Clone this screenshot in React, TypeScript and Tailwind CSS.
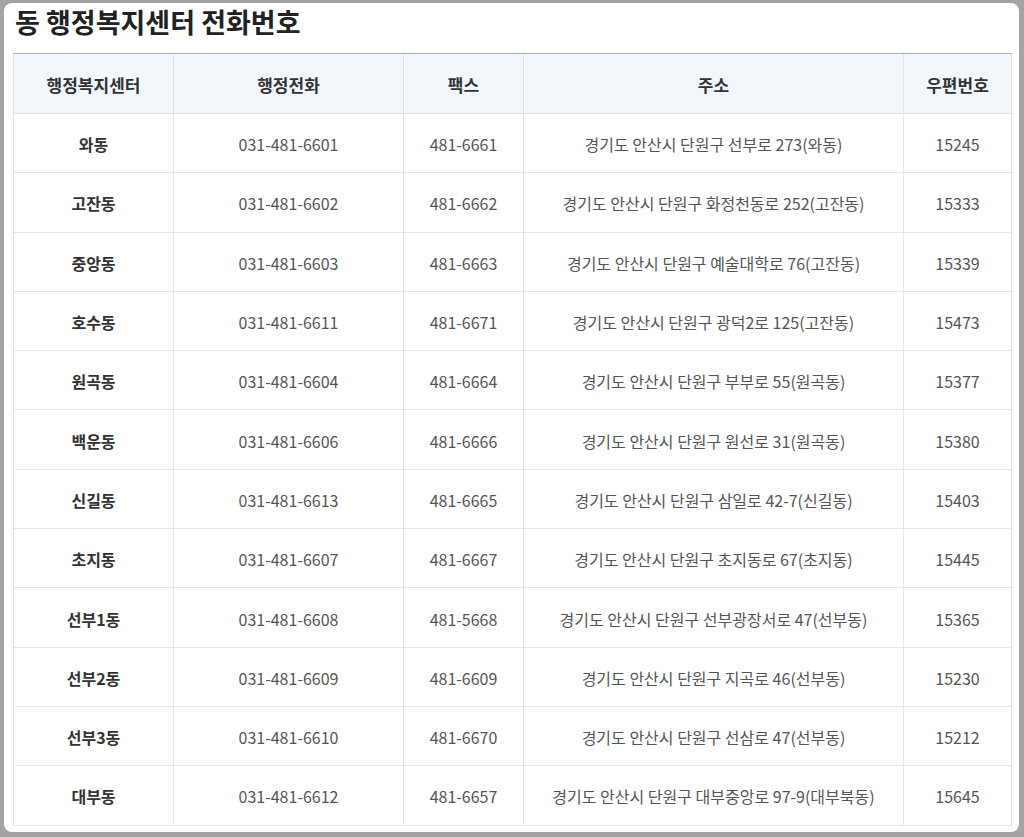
import React from "react";

const ROWS: [string, string, string, string, string][] = [
  ["와동", "031-481-6601", "481-6661", "경기도 안산시 단원구 선부로 273(와동)", "15245"],
  ["고잔동", "031-481-6602", "481-6662", "경기도 안산시 단원구 화정천동로 252(고잔동)", "15333"],
  ["중앙동", "031-481-6603", "481-6663", "경기도 안산시 단원구 예술대학로 76(고잔동)", "15339"],
  ["호수동", "031-481-6611", "481-6671", "경기도 안산시 단원구 광덕2로 125(고잔동)", "15473"],
  ["원곡동", "031-481-6604", "481-6664", "경기도 안산시 단원구 부부로 55(원곡동)", "15377"],
  ["백운동", "031-481-6606", "481-6666", "경기도 안산시 단원구 원선로 31(원곡동)", "15380"],
  ["신길동", "031-481-6613", "481-6665", "경기도 안산시 단원구 삼일로 42-7(신길동)", "15403"],
  ["초지동", "031-481-6607", "481-6667", "경기도 안산시 단원구 초지동로 67(초지동)", "15445"],
  ["선부1동", "031-481-6608", "481-5668", "경기도 안산시 단원구 선부광장서로 47(선부동)", "15365"],
  ["선부2동", "031-481-6609", "481-6609", "경기도 안산시 단원구 지곡로 46(선부동)", "15230"],
  ["선부3동", "031-481-6610", "481-6670", "경기도 안산시 단원구 선삼로 47(선부동)", "15212"],
  ["대부동", "031-481-6612", "481-6657", "경기도 안산시 단원구 대부중앙로 97-9(대부북동)", "15645"],
];

const HEAD = ["행정복지센터", "행정전화", "팩스", "주소", "우편번호"];
const COLS = "grid grid-cols-[160px_230px_120px_380px_1fr]";

export default function App() {
  return (
    <div
      className="w-[1024px] h-[837px] bg-[#a3a3a3] p-[3px_5px_5px_4px]"
      style={{ fontFamily: '"Noto Sans CJK KR", "Noto Sans", sans-serif' }}
    >
      <div className="h-full bg-white rounded-[8px] px-[9px] pt-[1px]">
        <h1 className="text-[27px] font-bold text-[#222] leading-[36px] pl-[2px] mb-[13px]">
          동 행정복지센터 전화번호
        </h1>
        <div className="border-t border-t-[#8fb4cf] border-x border-[#e2e2e2] w-[999px]">
          <div className={`${COLS} h-[60px] bg-[#f2f7fc] border-b border-[#e2e2e2]`}>
            {HEAD.map((h, i) => (
              <div
                key={h}
                className={`flex items-center justify-center pt-[2px] text-[17px] font-bold text-[#333] ${i < 4 ? "border-r border-[#e2e2e2]" : ""}`}
              >
                {h}
              </div>
            ))}
          </div>
          {ROWS.map((r) => (
            <div key={r[0]} className={`${COLS} h-[59.3px] border-b border-[#e6e6e6]`}>
              {r.map((c, i) => (
                <div
                  key={i}
                  className={`flex items-center justify-center pt-[2px] text-[16px] ${i === 0 ? "font-bold text-[#333]" : "text-[#555]"} ${i < 4 ? "border-r border-[#e6e6e6]" : ""}`}
                >
                  {c}
                </div>
              ))}
            </div>
          ))}
        </div>
      </div>
    </div>
  );
}
